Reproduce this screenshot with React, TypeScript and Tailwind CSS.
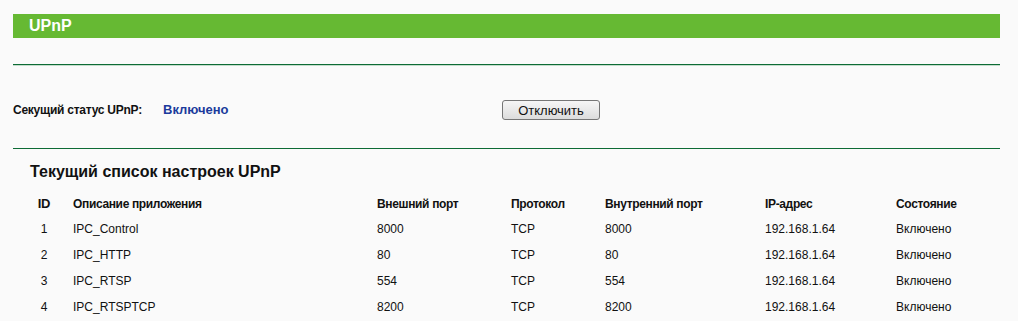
const COLUMNS = [
  "ID",
  "Описание приложения",
  "Внешний порт",
  "Протокол",
  "Внутренний порт",
  "IP-адрес",
  "Состояние",
];

const ROWS = [
  ["1", "IPC_Control", "8000", "TCP", "8000", "192.168.1.64", "Включено"],
  ["2", "IPC_HTTP", "80", "TCP", "80", "192.168.1.64", "Включено"],
  ["3", "IPC_RTSP", "554", "TCP", "554", "192.168.1.64", "Включено"],
  ["4", "IPC_RTSPTCP", "8200", "TCP", "8200", "192.168.1.64", "Включено"],
];

const GRID =
  "grid grid-cols-[43px_304px_134px_94px_160px_131px_1fr] items-center pl-[17px]";

export default function App() {
  return (
    <div className="min-h-[321px] w-[1018px] bg-[#fafafa] pt-[14px] font-['Liberation_Sans',Arial,sans-serif] text-[#111]">
      <div className="mx-[13px] w-[987px]">
        <div className="flex h-[24px] items-center bg-[#66b933] pl-[16px] text-[16px] font-bold text-white">
          UPnP
        </div>

        <div className="mt-[26px] border-t border-[#0d6b35]" />
        <div className="h-px bg-[#c3dccb]" />

        <div className="mt-[34px] flex h-[20px] items-center">
          <span className="w-[150px] text-[12px] font-bold tracking-[-0.25px]">Секущий статус UPnP:</span>
          <span className="w-[339px] text-[13px] font-bold text-[#1b3a9c]">Включено</span>
          <button
            type="button"
            className="h-[20px] w-[98px] rounded-[3px] border border-[#767676] bg-gradient-to-b from-[#f6f6f6] to-[#dcdcdc] text-[13px] leading-none text-[#111]"
          >
            Отключить
          </button>
        </div>

        <div className="mt-[28px] border-t border-[#0d6b35]" />

        <div className="mt-[13px] pl-[17px] text-[16px] font-bold leading-[20px]">
          Текущий список настроек UPnP
        </div>

        <div className="mt-[9px]">
          <div className={`${GRID} h-[25px] text-[12px] font-bold tracking-[-0.35px]`}>
            {COLUMNS.map((c, i) => (
              <div key={c} className={i === 0 ? "pr-[15px] text-center text-[13px]" : ""}>
                {c}
              </div>
            ))}
          </div>
          {ROWS.map((row) => (
            <div key={row[0]} className={`${GRID} h-[26px] text-[12px]`}>
              {row.map((cell, i) => (
                <div key={i} className={i === 0 ? "pr-[15px] text-center" : ""}>
                  {cell}
                </div>
              ))}
            </div>
          ))}
        </div>
      </div>
    </div>
  );
}
